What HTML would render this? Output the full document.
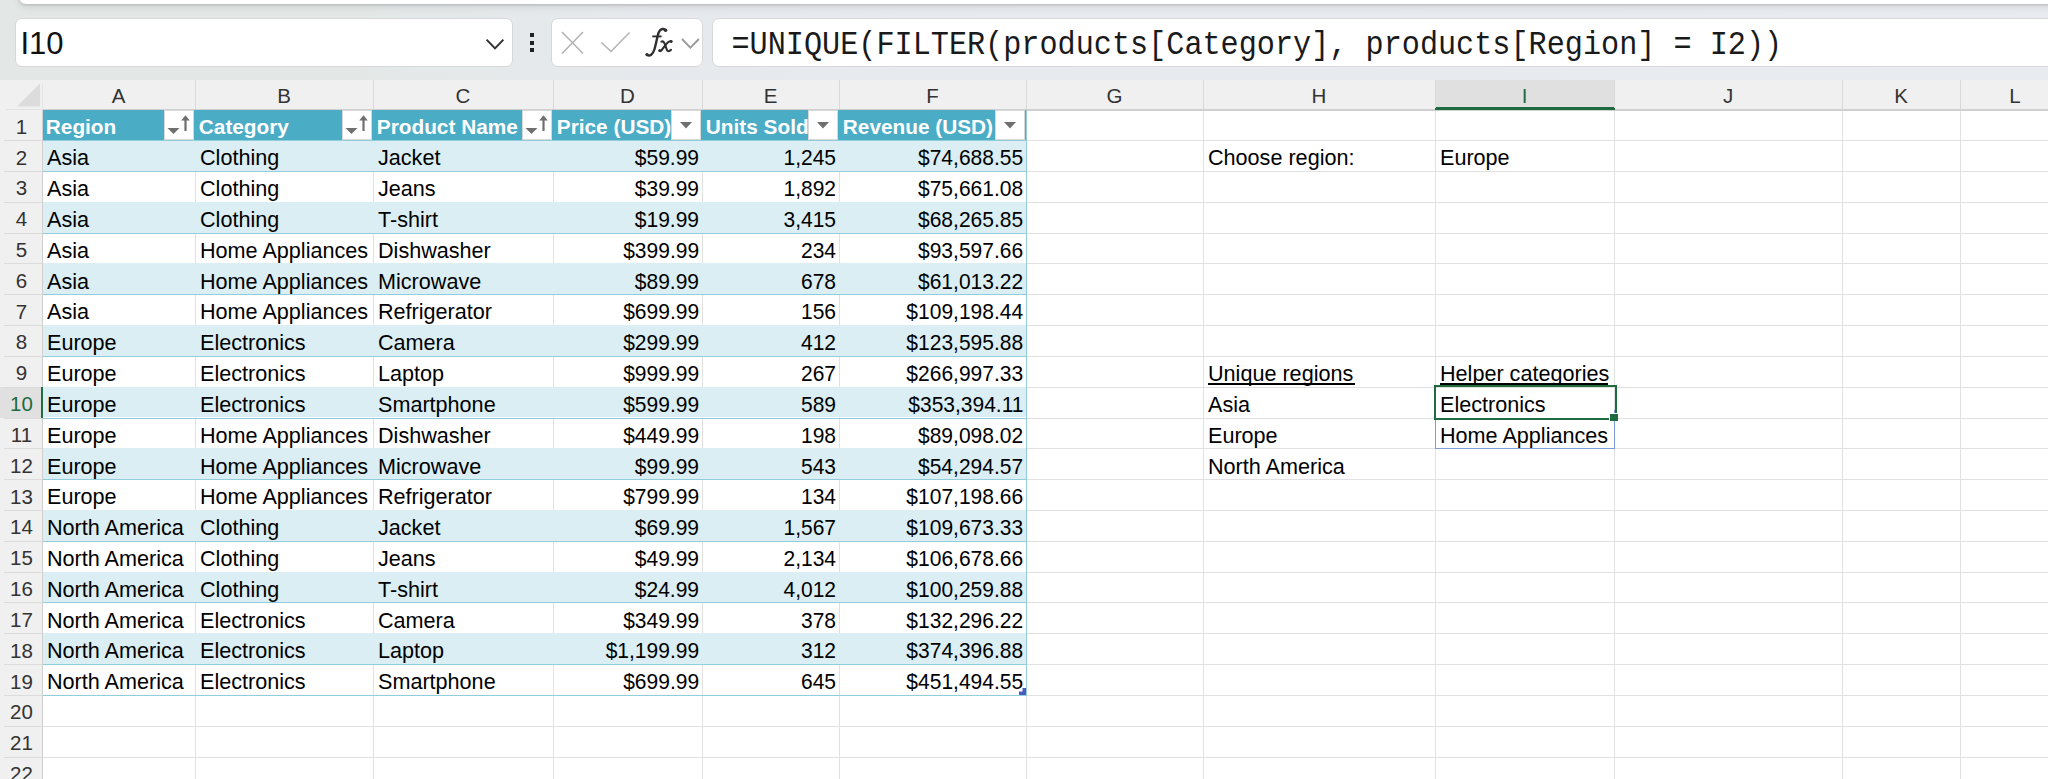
<!DOCTYPE html>
<html><head><meta charset="utf-8"><style>
*{margin:0;padding:0;box-sizing:border-box}
html,body{width:2048px;height:779px;overflow:hidden;background:#fff}
body{position:relative;font-family:"Liberation Sans",sans-serif;color:#000}
.a{position:absolute}
.t{position:absolute;white-space:nowrap;line-height:1.1176;font-size:21.6px}
.r{text-align:right}
.hl{position:absolute;height:1px}
.vl{position:absolute;width:1px}
</style></head><body>

<div class="a" style="left:0;top:0;width:2048px;height:80px;background:linear-gradient(90deg,#e3e8e6 0px,#e3e8e7 360px,#e5e9ec 560px,#e7eaee 900px,#e8ebef 2048px)"></div>
<div class="a" style="left:19px;top:-10px;width:2100px;height:14px;background:#fff;border-radius:0 0 0 7px;box-shadow:0 1px 3px rgba(0,0,0,.16),0 3px 10px rgba(0,0,0,.09)"></div>
<div class="a" style="left:15px;top:18px;width:498px;height:48.5px;background:#fff;border:1px solid #d6d8d9;border-radius:7px"></div>
<div class="t" style="left:20.5px;top:26.54px;font-size:31px;color:#111">I10</div>
<svg class="a" style="left:484px;top:36px" width="22" height="16" viewBox="0 0 22 16"><path d="M2.6 3.6 L11 12.4 L19.4 3.6" fill="none" stroke="#333" stroke-width="2"/></svg>
<div class="a" style="left:529.5px;top:33.0px;width:4px;height:4px;background:#222"></div>
<div class="a" style="left:529.5px;top:40.5px;width:4px;height:4px;background:#222"></div>
<div class="a" style="left:529.5px;top:48.0px;width:4px;height:4px;background:#222"></div>
<div class="a" style="left:550.5px;top:18px;width:152.5px;height:48.5px;background:#fff;border:1px solid #d6d8d9;border-radius:7px"></div>
<svg class="a" style="left:555px;top:25px" width="80" height="40" viewBox="0 0 80 40"><path d="M7 7 L28 28.5 M28 7 L7 28.5" stroke="#b4b4b4" stroke-width="1.6" fill="none"/><path d="M46.5 17.5 L56 26.5 L74.5 7.5" stroke="#b4b4b4" stroke-width="1.6" fill="none"/></svg>
<svg class="a" style="left:636px;top:22px" width="70" height="40" viewBox="0 0 70 40"><path d="M29.3 8.3 C28.3 6.2 24.5 6.4 22.8 10.2 C21.2 14 20.3 21.5 18.4 27.5 C16.8 32.6 13.8 34.6 11.2 33" stroke="#303030" stroke-width="2.4" fill="none" stroke-linecap="round"/><circle cx="29.6" cy="8.3" r="1.7" fill="#303030"/><circle cx="11" cy="32.6" r="1.7" fill="#303030"/><path d="M16.3 14.4 L25.6 14.4" stroke="#303030" stroke-width="1.9"/><path d="M25.4 19.6 C27.2 18.8 28.3 20.2 29.2 23 L30.8 27.6 C31.4 29.4 33 30 35 27.8" stroke="#303030" stroke-width="2.1" fill="none" stroke-linecap="round"/><path d="M35.3 19.6 C33.6 18.6 32 19.8 30 22.5 L26.2 27.3 C25.2 28.8 24.2 29.6 23.6 28.7" stroke="#303030" stroke-width="2.1" fill="none" stroke-linecap="round"/><circle cx="35.2" cy="19.5" r="1.4" fill="#303030"/><circle cx="23.7" cy="28.7" r="1.4" fill="#303030"/><path d="M46 17 L54.4 25.7 L62.9 17" stroke="#9a9a9a" stroke-width="1.8" fill="none"/></svg>
<div class="a" style="left:711.5px;top:18px;width:1400px;height:48.5px;background:#fff;border:1px solid #d6d8d9;border-radius:7px"></div>
<div class="t" style="left:731.5px;top:31.46px;font-family:'Liberation Mono',monospace;font-size:30.2px;color:#1a1a1a;line-height:1;transform-origin:0 25.14px;transform:scaleY(1.1)">=UNIQUE(FILTER(products[Category], products[Region] = I2))</div>
<div class="a" style="left:0;top:80px;width:2048px;height:699px;background:#fff"></div>
<div class="a" style="left:0;top:80px;width:2048px;height:30px;background:#f0f0f0"></div>
<div class="a" style="left:0;top:80px;width:42px;height:699px;background:#f0f0f0"></div>
<div class="a" style="left:1436px;top:80px;width:178px;height:30px;background:#e0e0e0"></div>
<div class="a" style="left:1435px;top:107px;width:180px;height:3px;background:#1d6b3e"></div>
<div class="a" style="left:0;top:387.18px;width:42px;height:30.82px;background:#e0e0e0"></div>
<div class="vl" style="left:195px;top:110px;height:669px;background:#e1e1e1"></div>
<div class="vl" style="left:195px;top:80px;height:30px;background:#d9d9d9"></div>
<div class="vl" style="left:373px;top:110px;height:669px;background:#e1e1e1"></div>
<div class="vl" style="left:373px;top:80px;height:30px;background:#d9d9d9"></div>
<div class="vl" style="left:553px;top:110px;height:669px;background:#e1e1e1"></div>
<div class="vl" style="left:553px;top:80px;height:30px;background:#d9d9d9"></div>
<div class="vl" style="left:702px;top:110px;height:669px;background:#e1e1e1"></div>
<div class="vl" style="left:702px;top:80px;height:30px;background:#d9d9d9"></div>
<div class="vl" style="left:839px;top:110px;height:669px;background:#e1e1e1"></div>
<div class="vl" style="left:839px;top:80px;height:30px;background:#d9d9d9"></div>
<div class="vl" style="left:1026px;top:110px;height:669px;background:#e1e1e1"></div>
<div class="vl" style="left:1026px;top:80px;height:30px;background:#d9d9d9"></div>
<div class="vl" style="left:1203px;top:110px;height:669px;background:#e1e1e1"></div>
<div class="vl" style="left:1203px;top:80px;height:30px;background:#d9d9d9"></div>
<div class="vl" style="left:1435px;top:110px;height:669px;background:#e1e1e1"></div>
<div class="vl" style="left:1435px;top:80px;height:30px;background:#d9d9d9"></div>
<div class="vl" style="left:1614px;top:110px;height:669px;background:#e1e1e1"></div>
<div class="vl" style="left:1614px;top:80px;height:30px;background:#d9d9d9"></div>
<div class="vl" style="left:1842px;top:110px;height:669px;background:#e1e1e1"></div>
<div class="vl" style="left:1842px;top:80px;height:30px;background:#d9d9d9"></div>
<div class="vl" style="left:1960px;top:110px;height:669px;background:#e1e1e1"></div>
<div class="vl" style="left:1960px;top:80px;height:30px;background:#d9d9d9"></div>
<div class="hl" style="left:43px;top:140.12px;width:2005px;background:#e1e1e1"></div>
<div class="hl" style="left:4px;top:140.12px;width:38px;background:#dcdcdc"></div>
<div class="hl" style="left:43px;top:170.94px;width:2005px;background:#e1e1e1"></div>
<div class="hl" style="left:4px;top:170.94px;width:38px;background:#dcdcdc"></div>
<div class="hl" style="left:43px;top:201.76px;width:2005px;background:#e1e1e1"></div>
<div class="hl" style="left:4px;top:201.76px;width:38px;background:#dcdcdc"></div>
<div class="hl" style="left:43px;top:232.58px;width:2005px;background:#e1e1e1"></div>
<div class="hl" style="left:4px;top:232.58px;width:38px;background:#dcdcdc"></div>
<div class="hl" style="left:43px;top:263.40px;width:2005px;background:#e1e1e1"></div>
<div class="hl" style="left:4px;top:263.40px;width:38px;background:#dcdcdc"></div>
<div class="hl" style="left:43px;top:294.22px;width:2005px;background:#e1e1e1"></div>
<div class="hl" style="left:4px;top:294.22px;width:38px;background:#dcdcdc"></div>
<div class="hl" style="left:43px;top:325.04px;width:2005px;background:#e1e1e1"></div>
<div class="hl" style="left:4px;top:325.04px;width:38px;background:#dcdcdc"></div>
<div class="hl" style="left:43px;top:355.86px;width:2005px;background:#e1e1e1"></div>
<div class="hl" style="left:4px;top:355.86px;width:38px;background:#dcdcdc"></div>
<div class="hl" style="left:43px;top:386.68px;width:2005px;background:#e1e1e1"></div>
<div class="hl" style="left:4px;top:386.68px;width:38px;background:#dcdcdc"></div>
<div class="hl" style="left:43px;top:417.50px;width:2005px;background:#e1e1e1"></div>
<div class="hl" style="left:4px;top:417.50px;width:38px;background:#dcdcdc"></div>
<div class="hl" style="left:43px;top:448.32px;width:2005px;background:#e1e1e1"></div>
<div class="hl" style="left:4px;top:448.32px;width:38px;background:#dcdcdc"></div>
<div class="hl" style="left:43px;top:479.14px;width:2005px;background:#e1e1e1"></div>
<div class="hl" style="left:4px;top:479.14px;width:38px;background:#dcdcdc"></div>
<div class="hl" style="left:43px;top:509.96px;width:2005px;background:#e1e1e1"></div>
<div class="hl" style="left:4px;top:509.96px;width:38px;background:#dcdcdc"></div>
<div class="hl" style="left:43px;top:540.78px;width:2005px;background:#e1e1e1"></div>
<div class="hl" style="left:4px;top:540.78px;width:38px;background:#dcdcdc"></div>
<div class="hl" style="left:43px;top:571.60px;width:2005px;background:#e1e1e1"></div>
<div class="hl" style="left:4px;top:571.60px;width:38px;background:#dcdcdc"></div>
<div class="hl" style="left:43px;top:602.42px;width:2005px;background:#e1e1e1"></div>
<div class="hl" style="left:4px;top:602.42px;width:38px;background:#dcdcdc"></div>
<div class="hl" style="left:43px;top:633.24px;width:2005px;background:#e1e1e1"></div>
<div class="hl" style="left:4px;top:633.24px;width:38px;background:#dcdcdc"></div>
<div class="hl" style="left:43px;top:664.06px;width:2005px;background:#e1e1e1"></div>
<div class="hl" style="left:4px;top:664.06px;width:38px;background:#dcdcdc"></div>
<div class="hl" style="left:43px;top:694.88px;width:2005px;background:#e1e1e1"></div>
<div class="hl" style="left:4px;top:694.88px;width:38px;background:#dcdcdc"></div>
<div class="hl" style="left:43px;top:725.70px;width:2005px;background:#e1e1e1"></div>
<div class="hl" style="left:4px;top:725.70px;width:38px;background:#dcdcdc"></div>
<div class="hl" style="left:43px;top:756.52px;width:2005px;background:#e1e1e1"></div>
<div class="hl" style="left:4px;top:756.52px;width:38px;background:#dcdcdc"></div>
<div class="vl" style="left:42.3px;top:110px;height:669px;background:#cfcfcf"></div><div class="vl" style="left:42.3px;top:84px;height:26px;background:#e4e4e4"></div>
<div class="hl" style="left:43px;top:109px;width:2005px;height:1.5px;background:#d0d0d0"></div><div class="hl" style="left:6px;top:108.5px;width:37px;height:1.5px;background:#e3e3e3"></div>
<div class="a" style="left:40.8px;top:386.98px;width:2.6px;height:30.82px;background:#1d6b3e"></div>
<div class="a" style="left:1435px;top:107.5px;width:180px;height:2.5px;background:#1d6b3e"></div>
<svg class="a" style="left:0;top:80px" width="42" height="30"><path d="M17 26.5 L40 26.5 L40 3.5 Z" fill="#dcdcdc"/></svg>
<div class="t" style="left:42px;width:153px;text-align:center;top:84.54px;font-size:20.5px;color:#333">A</div>
<div class="t" style="left:195px;width:178px;text-align:center;top:84.54px;font-size:20.5px;color:#333">B</div>
<div class="t" style="left:373px;width:180px;text-align:center;top:84.54px;font-size:20.5px;color:#333">C</div>
<div class="t" style="left:553px;width:149px;text-align:center;top:84.54px;font-size:20.5px;color:#333">D</div>
<div class="t" style="left:702px;width:137px;text-align:center;top:84.54px;font-size:20.5px;color:#333">E</div>
<div class="t" style="left:839px;width:187px;text-align:center;top:84.54px;font-size:20.5px;color:#333">F</div>
<div class="t" style="left:1026px;width:177px;text-align:center;top:84.54px;font-size:20.5px;color:#333">G</div>
<div class="t" style="left:1203px;width:232px;text-align:center;top:84.54px;font-size:20.5px;color:#333">H</div>
<div class="t" style="left:1435px;width:179px;text-align:center;top:84.54px;font-size:20.5px;color:#1d6b3e">I</div>
<div class="t" style="left:1614px;width:228px;text-align:center;top:84.54px;font-size:20.5px;color:#333">J</div>
<div class="t" style="left:1842px;width:118px;text-align:center;top:84.54px;font-size:20.5px;color:#333">K</div>
<div class="t" style="left:1960px;width:110px;text-align:center;top:84.54px;font-size:20.5px;color:#333">L</div>
<div class="t" style="left:0;width:43px;text-align:center;top:115.74px;font-size:20.5px;color:#333">1</div>
<div class="t" style="left:0;width:43px;text-align:center;top:146.56px;font-size:20.5px;color:#333">2</div>
<div class="t" style="left:0;width:43px;text-align:center;top:177.38px;font-size:20.5px;color:#333">3</div>
<div class="t" style="left:0;width:43px;text-align:center;top:208.20px;font-size:20.5px;color:#333">4</div>
<div class="t" style="left:0;width:43px;text-align:center;top:239.02px;font-size:20.5px;color:#333">5</div>
<div class="t" style="left:0;width:43px;text-align:center;top:269.84px;font-size:20.5px;color:#333">6</div>
<div class="t" style="left:0;width:43px;text-align:center;top:300.66px;font-size:20.5px;color:#333">7</div>
<div class="t" style="left:0;width:43px;text-align:center;top:331.48px;font-size:20.5px;color:#333">8</div>
<div class="t" style="left:0;width:43px;text-align:center;top:362.30px;font-size:20.5px;color:#333">9</div>
<div class="t" style="left:0;width:43px;text-align:center;top:393.12px;font-size:20.5px;color:#1d6b3e">10</div>
<div class="t" style="left:0;width:43px;text-align:center;top:423.94px;font-size:20.5px;color:#333">11</div>
<div class="t" style="left:0;width:43px;text-align:center;top:454.76px;font-size:20.5px;color:#333">12</div>
<div class="t" style="left:0;width:43px;text-align:center;top:485.58px;font-size:20.5px;color:#333">13</div>
<div class="t" style="left:0;width:43px;text-align:center;top:516.40px;font-size:20.5px;color:#333">14</div>
<div class="t" style="left:0;width:43px;text-align:center;top:547.22px;font-size:20.5px;color:#333">15</div>
<div class="t" style="left:0;width:43px;text-align:center;top:578.04px;font-size:20.5px;color:#333">16</div>
<div class="t" style="left:0;width:43px;text-align:center;top:608.86px;font-size:20.5px;color:#333">17</div>
<div class="t" style="left:0;width:43px;text-align:center;top:639.68px;font-size:20.5px;color:#333">18</div>
<div class="t" style="left:0;width:43px;text-align:center;top:670.50px;font-size:20.5px;color:#333">19</div>
<div class="t" style="left:0;width:43px;text-align:center;top:701.32px;font-size:20.5px;color:#333">20</div>
<div class="t" style="left:0;width:43px;text-align:center;top:732.14px;font-size:20.5px;color:#333">21</div>
<div class="t" style="left:0;width:43px;text-align:center;top:762.96px;font-size:20.5px;color:#333">22</div>
<div class="a" style="left:43px;top:110px;width:983px;height:30.5px;background:#4bacc6"></div>
<div class="a" style="left:43px;top:140.12px;width:983px;height:30.82px;background:#daeef3"></div>
<div class="hl" style="left:43px;top:170.94px;width:984px;background:#92cddc"></div>
<div class="hl" style="left:43px;top:201.76px;width:984px;background:#92cddc"></div>
<div class="a" style="left:43px;top:201.76px;width:983px;height:30.82px;background:#daeef3"></div>
<div class="hl" style="left:43px;top:232.58px;width:984px;background:#92cddc"></div>
<div class="hl" style="left:43px;top:263.40px;width:984px;background:#92cddc"></div>
<div class="a" style="left:43px;top:263.40px;width:983px;height:30.82px;background:#daeef3"></div>
<div class="hl" style="left:43px;top:294.22px;width:984px;background:#92cddc"></div>
<div class="hl" style="left:43px;top:325.04px;width:984px;background:#92cddc"></div>
<div class="a" style="left:43px;top:325.04px;width:983px;height:30.82px;background:#daeef3"></div>
<div class="hl" style="left:43px;top:355.86px;width:984px;background:#92cddc"></div>
<div class="hl" style="left:43px;top:386.68px;width:984px;background:#92cddc"></div>
<div class="a" style="left:43px;top:386.68px;width:983px;height:30.82px;background:#daeef3"></div>
<div class="hl" style="left:43px;top:417.50px;width:984px;background:#92cddc"></div>
<div class="hl" style="left:43px;top:448.32px;width:984px;background:#92cddc"></div>
<div class="a" style="left:43px;top:448.32px;width:983px;height:30.82px;background:#daeef3"></div>
<div class="hl" style="left:43px;top:479.14px;width:984px;background:#92cddc"></div>
<div class="hl" style="left:43px;top:509.96px;width:984px;background:#92cddc"></div>
<div class="a" style="left:43px;top:509.96px;width:983px;height:30.82px;background:#daeef3"></div>
<div class="hl" style="left:43px;top:540.78px;width:984px;background:#92cddc"></div>
<div class="hl" style="left:43px;top:571.60px;width:984px;background:#92cddc"></div>
<div class="a" style="left:43px;top:571.60px;width:983px;height:30.82px;background:#daeef3"></div>
<div class="hl" style="left:43px;top:602.42px;width:984px;background:#92cddc"></div>
<div class="hl" style="left:43px;top:633.24px;width:984px;background:#92cddc"></div>
<div class="a" style="left:43px;top:633.24px;width:983px;height:30.82px;background:#daeef3"></div>
<div class="hl" style="left:43px;top:664.06px;width:984px;background:#92cddc"></div>
<div class="hl" style="left:43px;top:694.88px;width:984px;background:#92cddc"></div>
<div class="hl" style="left:43px;top:140.12px;width:984px;background:#92cddc"></div>
<div class="vl" style="left:1026px;top:110px;height:585.88px;background:#92cddc"></div>
<div class="t" style="left:45.8px;top:115.27px;font-weight:bold;font-size:20.8px;color:#fff">Region</div>
<div class="t" style="left:198.8px;top:115.27px;font-weight:bold;font-size:20.8px;color:#fff">Category</div>
<div class="t" style="left:376.8px;top:115.27px;font-weight:bold;font-size:20.8px;color:#fff">Product Name</div>
<div class="t" style="left:556.8px;top:115.27px;font-weight:bold;font-size:20.8px;color:#fff">Price (USD)</div>
<div class="t" style="left:705.8px;top:115.27px;font-weight:bold;font-size:20.8px;color:#fff">Units Sold</div>
<div class="t" style="left:842.8px;top:115.27px;font-weight:bold;font-size:20.8px;color:#fff">Revenue (USD)</div>
<div class="a" style="left:164.2px;top:110px;width:30px;height:30px;background:#fff;border:1px solid #d8d8d8"></div>
<svg class="a" style="left:164.2px;top:110.5px" width="30" height="29"><path d="M3.5 17 L15.5 17 L9.5 23 Z" fill="#6f6f6f"/><path d="M21.5 20 L21.5 7" stroke="#6f6f6f" stroke-width="2.2"/><path d="M17.2 9.5 L21.5 4.2 L25.8 9.5 Z" fill="#6f6f6f"/></svg>
<div class="a" style="left:342.2px;top:110px;width:30px;height:30px;background:#fff;border:1px solid #d8d8d8"></div>
<svg class="a" style="left:342.2px;top:110.5px" width="30" height="29"><path d="M3.5 17 L15.5 17 L9.5 23 Z" fill="#6f6f6f"/><path d="M21.5 20 L21.5 7" stroke="#6f6f6f" stroke-width="2.2"/><path d="M17.2 9.5 L21.5 4.2 L25.8 9.5 Z" fill="#6f6f6f"/></svg>
<div class="a" style="left:522.2px;top:110px;width:30px;height:30px;background:#fff;border:1px solid #d8d8d8"></div>
<svg class="a" style="left:522.2px;top:110.5px" width="30" height="29"><path d="M3.5 17 L15.5 17 L9.5 23 Z" fill="#6f6f6f"/><path d="M21.5 20 L21.5 7" stroke="#6f6f6f" stroke-width="2.2"/><path d="M17.2 9.5 L21.5 4.2 L25.8 9.5 Z" fill="#6f6f6f"/></svg>
<div class="a" style="left:671.2px;top:110px;width:30px;height:30px;background:#fff;border:1px solid #d8d8d8"></div>
<svg class="a" style="left:671.2px;top:110.5px" width="30" height="29"><path d="M9 11 L21 11 L15 17.5 Z" fill="#6f6f6f"/></svg>
<div class="a" style="left:808.2px;top:110px;width:30px;height:30px;background:#fff;border:1px solid #d8d8d8"></div>
<svg class="a" style="left:808.2px;top:110.5px" width="30" height="29"><path d="M9 11 L21 11 L15 17.5 Z" fill="#6f6f6f"/></svg>
<div class="a" style="left:995.2px;top:110px;width:30px;height:30px;background:#fff;border:1px solid #d8d8d8"></div>
<svg class="a" style="left:995.2px;top:110.5px" width="30" height="29"><path d="M9 11 L21 11 L15 17.5 Z" fill="#6f6f6f"/></svg>
<div class="t" style="left:47px;top:146.37px">Asia</div>
<div class="t" style="left:200px;top:146.37px">Clothing</div>
<div class="t" style="left:378px;top:146.37px">Jacket</div>
<div class="t r" style="right:1348.7px;top:146.37px;transform:scaleX(0.972);transform-origin:100% 50%">$59.99</div>
<div class="t r" style="right:1211.7px;top:146.37px;transform:scaleX(0.972);transform-origin:100% 50%">1,245</div>
<div class="t r" style="right:1024.7px;top:146.37px;transform:scaleX(0.972);transform-origin:100% 50%">$74,688.55</div>
<div class="t" style="left:47px;top:177.19px">Asia</div>
<div class="t" style="left:200px;top:177.19px">Clothing</div>
<div class="t" style="left:378px;top:177.19px">Jeans</div>
<div class="t r" style="right:1348.7px;top:177.19px;transform:scaleX(0.972);transform-origin:100% 50%">$39.99</div>
<div class="t r" style="right:1211.7px;top:177.19px;transform:scaleX(0.972);transform-origin:100% 50%">1,892</div>
<div class="t r" style="right:1024.7px;top:177.19px;transform:scaleX(0.972);transform-origin:100% 50%">$75,661.08</div>
<div class="t" style="left:47px;top:208.01px">Asia</div>
<div class="t" style="left:200px;top:208.01px">Clothing</div>
<div class="t" style="left:378px;top:208.01px">T-shirt</div>
<div class="t r" style="right:1348.7px;top:208.01px;transform:scaleX(0.972);transform-origin:100% 50%">$19.99</div>
<div class="t r" style="right:1211.7px;top:208.01px;transform:scaleX(0.972);transform-origin:100% 50%">3,415</div>
<div class="t r" style="right:1024.7px;top:208.01px;transform:scaleX(0.972);transform-origin:100% 50%">$68,265.85</div>
<div class="t" style="left:47px;top:238.83px">Asia</div>
<div class="t" style="left:200px;top:238.83px">Home Appliances</div>
<div class="t" style="left:378px;top:238.83px">Dishwasher</div>
<div class="t r" style="right:1348.7px;top:238.83px;transform:scaleX(0.972);transform-origin:100% 50%">$399.99</div>
<div class="t r" style="right:1211.7px;top:238.83px;transform:scaleX(0.972);transform-origin:100% 50%">234</div>
<div class="t r" style="right:1024.7px;top:238.83px;transform:scaleX(0.972);transform-origin:100% 50%">$93,597.66</div>
<div class="t" style="left:47px;top:269.65px">Asia</div>
<div class="t" style="left:200px;top:269.65px">Home Appliances</div>
<div class="t" style="left:378px;top:269.65px">Microwave</div>
<div class="t r" style="right:1348.7px;top:269.65px;transform:scaleX(0.972);transform-origin:100% 50%">$89.99</div>
<div class="t r" style="right:1211.7px;top:269.65px;transform:scaleX(0.972);transform-origin:100% 50%">678</div>
<div class="t r" style="right:1024.7px;top:269.65px;transform:scaleX(0.972);transform-origin:100% 50%">$61,013.22</div>
<div class="t" style="left:47px;top:300.47px">Asia</div>
<div class="t" style="left:200px;top:300.47px">Home Appliances</div>
<div class="t" style="left:378px;top:300.47px">Refrigerator</div>
<div class="t r" style="right:1348.7px;top:300.47px;transform:scaleX(0.972);transform-origin:100% 50%">$699.99</div>
<div class="t r" style="right:1211.7px;top:300.47px;transform:scaleX(0.972);transform-origin:100% 50%">156</div>
<div class="t r" style="right:1024.7px;top:300.47px;transform:scaleX(0.972);transform-origin:100% 50%">$109,198.44</div>
<div class="t" style="left:47px;top:331.29px">Europe</div>
<div class="t" style="left:200px;top:331.29px">Electronics</div>
<div class="t" style="left:378px;top:331.29px">Camera</div>
<div class="t r" style="right:1348.7px;top:331.29px;transform:scaleX(0.972);transform-origin:100% 50%">$299.99</div>
<div class="t r" style="right:1211.7px;top:331.29px;transform:scaleX(0.972);transform-origin:100% 50%">412</div>
<div class="t r" style="right:1024.7px;top:331.29px;transform:scaleX(0.972);transform-origin:100% 50%">$123,595.88</div>
<div class="t" style="left:47px;top:362.11px">Europe</div>
<div class="t" style="left:200px;top:362.11px">Electronics</div>
<div class="t" style="left:378px;top:362.11px">Laptop</div>
<div class="t r" style="right:1348.7px;top:362.11px;transform:scaleX(0.972);transform-origin:100% 50%">$999.99</div>
<div class="t r" style="right:1211.7px;top:362.11px;transform:scaleX(0.972);transform-origin:100% 50%">267</div>
<div class="t r" style="right:1024.7px;top:362.11px;transform:scaleX(0.972);transform-origin:100% 50%">$266,997.33</div>
<div class="t" style="left:47px;top:392.93px">Europe</div>
<div class="t" style="left:200px;top:392.93px">Electronics</div>
<div class="t" style="left:378px;top:392.93px">Smartphone</div>
<div class="t r" style="right:1348.7px;top:392.93px;transform:scaleX(0.972);transform-origin:100% 50%">$599.99</div>
<div class="t r" style="right:1211.7px;top:392.93px;transform:scaleX(0.972);transform-origin:100% 50%">589</div>
<div class="t r" style="right:1024.7px;top:392.93px;transform:scaleX(0.972);transform-origin:100% 50%">$353,394.11</div>
<div class="t" style="left:47px;top:423.75px">Europe</div>
<div class="t" style="left:200px;top:423.75px">Home Appliances</div>
<div class="t" style="left:378px;top:423.75px">Dishwasher</div>
<div class="t r" style="right:1348.7px;top:423.75px;transform:scaleX(0.972);transform-origin:100% 50%">$449.99</div>
<div class="t r" style="right:1211.7px;top:423.75px;transform:scaleX(0.972);transform-origin:100% 50%">198</div>
<div class="t r" style="right:1024.7px;top:423.75px;transform:scaleX(0.972);transform-origin:100% 50%">$89,098.02</div>
<div class="t" style="left:47px;top:454.57px">Europe</div>
<div class="t" style="left:200px;top:454.57px">Home Appliances</div>
<div class="t" style="left:378px;top:454.57px">Microwave</div>
<div class="t r" style="right:1348.7px;top:454.57px;transform:scaleX(0.972);transform-origin:100% 50%">$99.99</div>
<div class="t r" style="right:1211.7px;top:454.57px;transform:scaleX(0.972);transform-origin:100% 50%">543</div>
<div class="t r" style="right:1024.7px;top:454.57px;transform:scaleX(0.972);transform-origin:100% 50%">$54,294.57</div>
<div class="t" style="left:47px;top:485.39px">Europe</div>
<div class="t" style="left:200px;top:485.39px">Home Appliances</div>
<div class="t" style="left:378px;top:485.39px">Refrigerator</div>
<div class="t r" style="right:1348.7px;top:485.39px;transform:scaleX(0.972);transform-origin:100% 50%">$799.99</div>
<div class="t r" style="right:1211.7px;top:485.39px;transform:scaleX(0.972);transform-origin:100% 50%">134</div>
<div class="t r" style="right:1024.7px;top:485.39px;transform:scaleX(0.972);transform-origin:100% 50%">$107,198.66</div>
<div class="t" style="left:47px;top:516.21px">North America</div>
<div class="t" style="left:200px;top:516.21px">Clothing</div>
<div class="t" style="left:378px;top:516.21px">Jacket</div>
<div class="t r" style="right:1348.7px;top:516.21px;transform:scaleX(0.972);transform-origin:100% 50%">$69.99</div>
<div class="t r" style="right:1211.7px;top:516.21px;transform:scaleX(0.972);transform-origin:100% 50%">1,567</div>
<div class="t r" style="right:1024.7px;top:516.21px;transform:scaleX(0.972);transform-origin:100% 50%">$109,673.33</div>
<div class="t" style="left:47px;top:547.03px">North America</div>
<div class="t" style="left:200px;top:547.03px">Clothing</div>
<div class="t" style="left:378px;top:547.03px">Jeans</div>
<div class="t r" style="right:1348.7px;top:547.03px;transform:scaleX(0.972);transform-origin:100% 50%">$49.99</div>
<div class="t r" style="right:1211.7px;top:547.03px;transform:scaleX(0.972);transform-origin:100% 50%">2,134</div>
<div class="t r" style="right:1024.7px;top:547.03px;transform:scaleX(0.972);transform-origin:100% 50%">$106,678.66</div>
<div class="t" style="left:47px;top:577.85px">North America</div>
<div class="t" style="left:200px;top:577.85px">Clothing</div>
<div class="t" style="left:378px;top:577.85px">T-shirt</div>
<div class="t r" style="right:1348.7px;top:577.85px;transform:scaleX(0.972);transform-origin:100% 50%">$24.99</div>
<div class="t r" style="right:1211.7px;top:577.85px;transform:scaleX(0.972);transform-origin:100% 50%">4,012</div>
<div class="t r" style="right:1024.7px;top:577.85px;transform:scaleX(0.972);transform-origin:100% 50%">$100,259.88</div>
<div class="t" style="left:47px;top:608.67px">North America</div>
<div class="t" style="left:200px;top:608.67px">Electronics</div>
<div class="t" style="left:378px;top:608.67px">Camera</div>
<div class="t r" style="right:1348.7px;top:608.67px;transform:scaleX(0.972);transform-origin:100% 50%">$349.99</div>
<div class="t r" style="right:1211.7px;top:608.67px;transform:scaleX(0.972);transform-origin:100% 50%">378</div>
<div class="t r" style="right:1024.7px;top:608.67px;transform:scaleX(0.972);transform-origin:100% 50%">$132,296.22</div>
<div class="t" style="left:47px;top:639.49px">North America</div>
<div class="t" style="left:200px;top:639.49px">Electronics</div>
<div class="t" style="left:378px;top:639.49px">Laptop</div>
<div class="t r" style="right:1348.7px;top:639.49px;transform:scaleX(0.972);transform-origin:100% 50%">$1,199.99</div>
<div class="t r" style="right:1211.7px;top:639.49px;transform:scaleX(0.972);transform-origin:100% 50%">312</div>
<div class="t r" style="right:1024.7px;top:639.49px;transform:scaleX(0.972);transform-origin:100% 50%">$374,396.88</div>
<div class="t" style="left:47px;top:670.31px">North America</div>
<div class="t" style="left:200px;top:670.31px">Electronics</div>
<div class="t" style="left:378px;top:670.31px">Smartphone</div>
<div class="t r" style="right:1348.7px;top:670.31px;transform:scaleX(0.972);transform-origin:100% 50%">$699.99</div>
<div class="t r" style="right:1211.7px;top:670.31px;transform:scaleX(0.972);transform-origin:100% 50%">645</div>
<div class="t r" style="right:1024.7px;top:670.31px;transform:scaleX(0.972);transform-origin:100% 50%">$451,494.55</div>
<div class="t" style="left:1208px;top:146.37px;">Choose region:</div>
<div class="t" style="left:1440px;top:146.37px;">Europe</div>
<div class="t" style="left:1208px;top:362.11px;">Unique regions</div>
<div class="t" style="left:1440px;top:362.11px;">Helper categories</div>
<div class="a" style="left:1208px;top:383px;width:147px;height:2.2px;background:#000"></div>
<div class="a" style="left:1440px;top:383px;width:168px;height:2.2px;background:#000"></div>
<div class="t" style="left:1208px;top:392.93px;">Asia</div>
<div class="t" style="left:1208px;top:423.75px;">Europe</div>
<div class="t" style="left:1208px;top:454.57px;">North America</div>
<div class="t" style="left:1440px;top:392.93px;">Electronics</div>
<div class="t" style="left:1440px;top:423.75px;">Home Appliances</div>
<div class="a" style="left:1435px;top:410px;width:180px;height:39.32px;border:1px solid #7b9fd6;border-top:none"></div>
<div class="a" style="left:1433.5px;top:385px;width:183px;height:35px;border:2.6px solid #1d6b3e"></div>
<div class="a" style="left:1609px;top:412.5px;width:8.5px;height:8.5px;background:#1d6b3e;border:1px solid #fff;border-right:none;border-bottom:none"></div>
<svg class="a" style="left:1019px;top:688px" width="7" height="7"><path d="M3.5 0 L7 0 L7 7 L0 7 L0 3.5 L3.5 3.5 Z" fill="#4a5bc0"/></svg>
</body></html>
